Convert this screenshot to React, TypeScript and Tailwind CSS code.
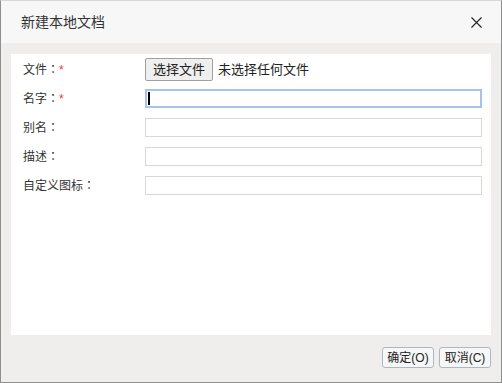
import { X } from 'lucide-react';

const FONT = "font-['Liberation_Sans','Noto_Sans_CJK_SC',sans-serif]";

const FIELDS = [
  { label: '名字', required: true, focused: true },
  { label: '别名', required: false, focused: false },
  { label: '描述', required: false, focused: false },
  { label: '自定义图标', required: false, focused: false },
];

function Label({ text, required }: { text: string; required?: boolean }) {
  return (
    <div className="w-[122px] shrink-0 text-[12px] text-[#333]">
      {text}
      <span className="font-['Noto_Sans_CJK_TC',sans-serif]">：</span>
      {required && <span className="text-[#e33]">*</span>}
    </div>
  );
}

export default function App() {
  return (
    <div className={`${FONT} w-[502px] h-[383px] flex flex-col bg-[#efeeec] border-x border-b border-[#8e8e8e] border-t border-t-[#d8d8d8]`}>
      {/* Header */}
      <div className="h-[42px] shrink-0 flex items-center justify-between bg-[#f7f7f7] pl-[20px] pr-[15px]">
        <span className="text-[14px] text-[#333]">新建本地文档</span>
        <X size={19} strokeWidth={1.4} className="text-[#222]" />
      </div>

      {/* Body */}
      <div className="flex-1 flex flex-col px-[10px] pt-[11px]">
        <div className="h-[281px] bg-white pl-[12px] pr-[8px] pt-[4px] flex flex-col">
          <div className="flex items-center h-[23px]">
            <Label text="文件" required />
            <button className="h-[23px] px-[7px] border border-[#a0a0a0] rounded-[2px] bg-[#efefef] text-[13px] text-[#222]">
              选择文件
            </button>
            <span className="ml-[5px] text-[13px] text-[#222]">未选择任何文件</span>
          </div>
          <div className="flex flex-col gap-[10px] mt-[8px]">
            {FIELDS.map((f) => (
              <div key={f.label} className="flex items-center h-[19px]">
                <Label text={f.label} required={f.required} />
                {f.focused ? (
                  <div className="w-[337px] h-[19px] border-2 border-[#a6c3f0] flex items-center pl-[1px]">
                    <div className="w-[2px] h-[13px] bg-black" />
                  </div>
                ) : (
                  <div className="w-[337px] h-[19px] border border-[#d8d8d4] bg-white" />
                )}
              </div>
            ))}
          </div>
        </div>

        {/* Footer */}
        <div className="flex justify-end gap-[5px] pt-[12px]">
          <button className="h-[21px] w-[52px] border border-[#a9b7c6] rounded-[3px] bg-[#f7f7f7] text-[12px] text-[#222]">
            确定(O)
          </button>
          <button className="h-[21px] w-[52px] border border-[#a9b7c6] rounded-[3px] bg-[#f7f7f7] text-[12px] text-[#222]">
            取消(C)
          </button>
        </div>
      </div>
    </div>
  );
}
